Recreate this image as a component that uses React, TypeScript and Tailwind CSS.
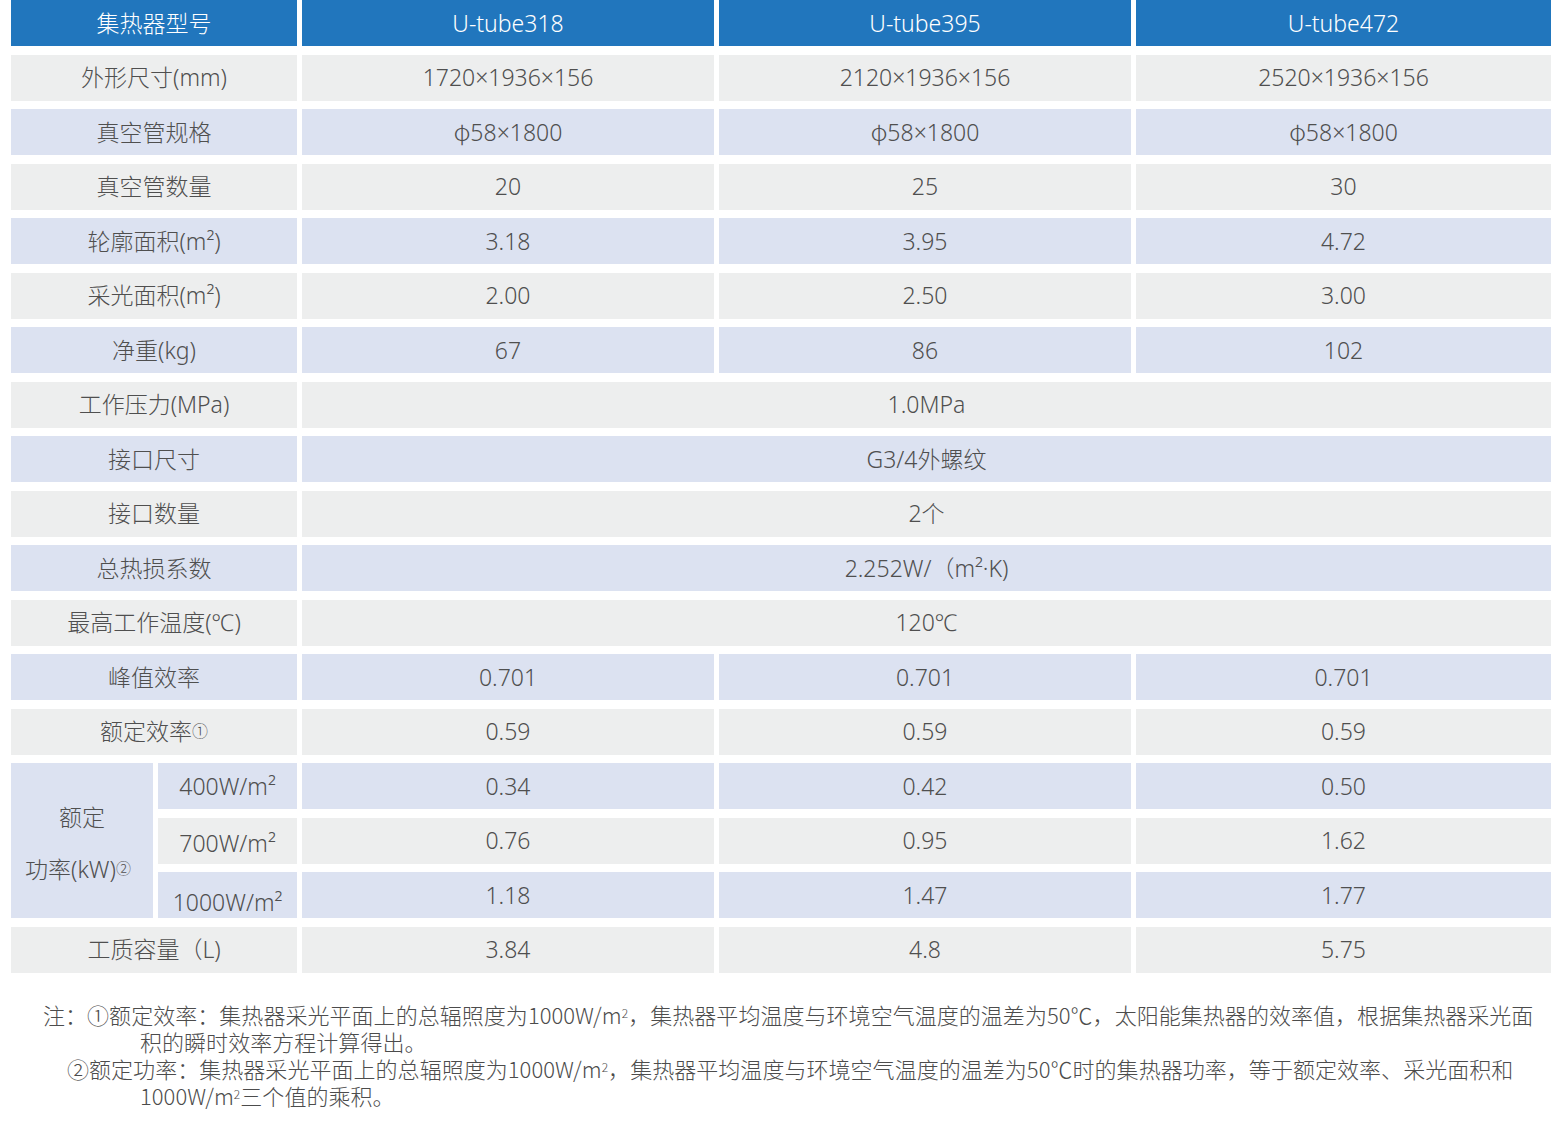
const font = { fontFamily: '"Noto Sans", "Noto Sans CJK SC", sans-serif' };
const cjk = { fontFamily: '"Noto Sans CJK SC", "Noto Sans", sans-serif' };

const grey = "bg-[#edeeee]";
const blue = "bg-[#dce2f1]";
const cell = "flex items-center justify-center h-[46px] text-[23px] text-[#4f4f4f] font-light";

type Row = { label: React.ReactNode; values: React.ReactNode[]; bg: string };

const phi = (
  <span>
    <span style={cjk}>φ</span>58×1800
  </span>
);

const rowsTop: Row[] = [
  { label: "外形尺寸(mm)", values: ["1720×1936×156", "2120×1936×156", "2520×1936×156"], bg: grey },
  { label: "真空管规格", values: [phi, phi, phi], bg: blue },
  { label: "真空管数量", values: ["20", "25", "30"], bg: grey },
  { label: "轮廓面积(m²)", values: ["3.18", "3.95", "4.72"], bg: blue },
  { label: "采光面积(m²)", values: ["2.00", "2.50", "3.00"], bg: grey },
  { label: "净重(kg)", values: ["67", "86", "102"], bg: blue },
];

const rowsMerged: Row[] = [
  { label: "工作压力(MPa)", values: ["1.0MPa"], bg: grey },
  { label: "接口尺寸", values: ["G3/4外螺纹"], bg: blue },
  { label: "接口数量", values: ["2个"], bg: grey },
  { label: "总热损系数", values: ["2.252W/（m²·K)"], bg: blue },
  { label: "最高工作温度(℃)", values: ["120℃"], bg: grey },
];

const rowsEff: Row[] = [
  { label: "峰值效率", values: ["0.701", "0.701", "0.701"], bg: blue },
  {
    label: (
      <span>
        额定效率<sup className="text-[16px] relative -top-[3px]">①</sup>
      </span>
    ),
    values: ["0.59", "0.59", "0.59"],
    bg: grey,
  },
];

const power = [
  { label: "400W/m²", values: ["0.34", "0.42", "0.50"], bg: blue, pad: "" },
  { label: "700W/m²", values: ["0.76", "0.95", "1.62"], bg: grey, pad: "pt-[6px]" },
  { label: "1000W/m²", values: ["1.18", "1.47", "1.77"], bg: blue, pad: "pt-[14px]" },
];

function ValueCells({ row }: { row: Row }) {
  if (row.values.length === 1) {
    return <div className={`${cell} ${row.bg} col-span-3`}>{row.values[0]}</div>;
  }
  return (
    <>
      {row.values.map((v, i) => (
        <div key={i} className={`${cell} ${row.bg}`}>
          {v}
        </div>
      ))}
    </>
  );
}

export default function App() {
  return (
    <div className="w-[1563px] bg-white pl-[11px] pb-[30px]" style={font}>
      <div className="grid w-[1540px] grid-cols-[142px_139px_412px_412px_415px] gap-x-[5px] gap-y-[8.5px]">
        <div className={`${cell} col-span-2 h-[45.5px] bg-[#2176bd] !text-white`}>集热器型号</div>
        {["U-tube318", "U-tube395", "U-tube472"].map((h) => (
          <div key={h} className={`${cell} h-[45.5px] bg-[#2176bd] !text-white`}>
            {h}
          </div>
        ))}

        {[...rowsTop, ...rowsMerged, ...rowsEff].map((r, i) => (
          <div key={i} className="contents">
            <div className={`${cell} ${r.bg} col-span-2`}>{r.label}</div>
            <ValueCells row={r} />
          </div>
        ))}

        <div className={`${blue} row-span-3 flex flex-col items-center justify-center text-[23px] text-[#4f4f4f] font-light pt-[4px]`}>
          <div className="h-[52px] leading-[52px]">额定</div>
          <div className="h-[52px] leading-[52px] pr-[8px]">
            功率(kW)<sup className="text-[15px] relative -top-[4px]">②</sup>
          </div>
        </div>
        {power.map((p) => (
          <div key={p.label} className="contents">
            <div className={`${cell} ${p.bg} ${p.pad}`}>{p.label}</div>
            {p.values.map((v, i) => (
              <div key={i} className={`${cell} ${p.bg}`}>
                {v}
              </div>
            ))}
          </div>
        ))}

        <div className={`${cell} ${grey} col-span-2`}>工质容量（L)</div>
        {["3.84", "4.8", "5.75"].map((v) => (
          <div key={v} className={`${cell} ${grey}`}>
            {v}
          </div>
        ))}
      </div>

      <div className="mt-[28px] text-[22px] leading-[27.3px] tracking-[0.04px] text-[#4c4c4c] font-light whitespace-nowrap" style={cjk}>
        <div className="pl-[32px]">
          注：①额定效率：集热器采光平面上的总辐照度为1000W/m<sup className="text-[12px]">2</sup>，集热器平均温度与环境空气温度的温差为50℃，太阳能集热器的效率值，根据集热器采光面
        </div>
        <div className="pl-[129px]">积的瞬时效率方程计算得出。</div>
        <div className="pl-[56px]">
          ②额定功率：集热器采光平面上的总辐照度为1000W/m<sup className="text-[12px]">2</sup>，集热器平均温度与环境空气温度的温差为50℃时的集热器功率，等于额定效率、采光面积和
        </div>
        <div className="pl-[129px]">
          1000W/m<sup className="text-[12px]">2</sup>三个值的乘积。
        </div>
      </div>
    </div>
  );
}
